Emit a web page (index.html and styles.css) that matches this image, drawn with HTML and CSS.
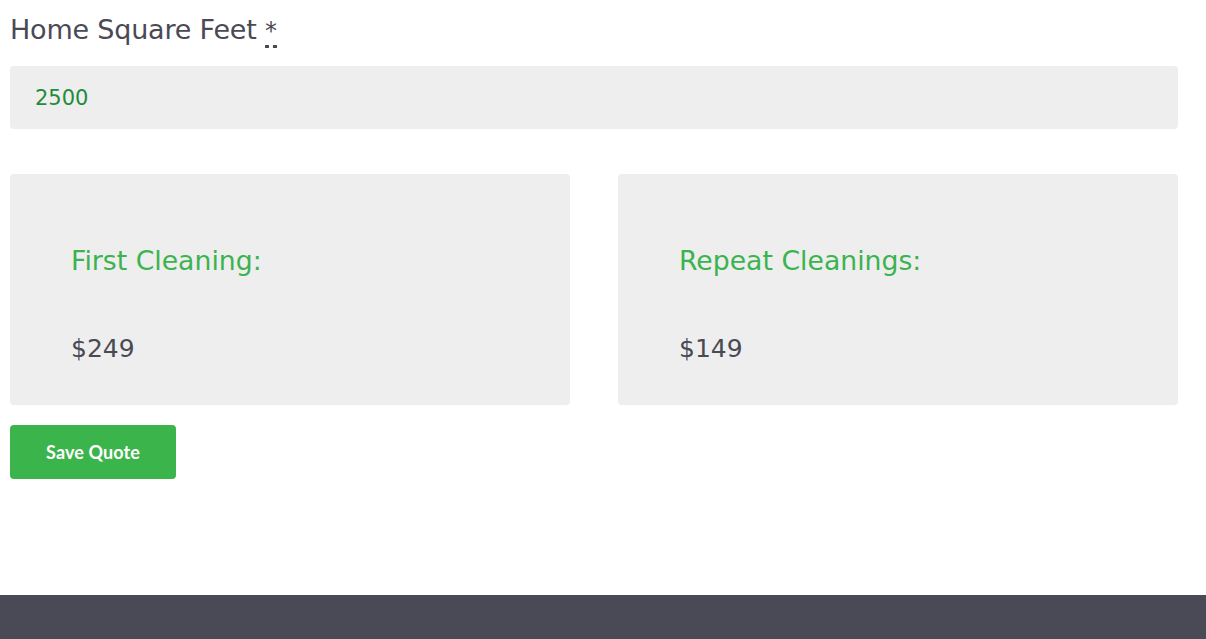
FILE: index.html
```html
<!DOCTYPE html>
<html>
<head>
<meta charset="utf-8">
<link rel="stylesheet" href="styles.css">
</head>
<body>
<main class="page">
  <div class="field">
    <label class="label">Home Square Feet <abbr class="req" title="required">*</abbr></label>
    <div class="input">2500</div>
  </div>
  <div class="cards">
    <div class="card">
      <div class="card-title">First Cleaning:</div>
      <div class="card-price">$249</div>
    </div>
    <div class="card">
      <div class="card-title">Repeat Cleanings:</div>
      <div class="card-price">$149</div>
    </div>
  </div>
  <button class="btn">Save Quote</button>
</main>
<footer class="footer"></footer>
</body>
</html>
```
FILE: styles.css
```css
html, body {
  margin: 0;
  padding: 0;
  background: #ffffff;
}
body {
  font-family: "DejaVu Sans", Verdana, sans-serif;
  color: #4a4a55;
  height: 639px;
  display: flex;
  flex-direction: column;
}
.page {
  padding: 11px 28px 0 10px;
  flex: 1;
}
.field {
  display: flex;
  flex-direction: column;
}
.label {
  font-size: 27px;
  line-height: 37px;
  color: #4a4a55;
  letter-spacing: -0.2px;
}
.req {
  text-decoration: none;
  border-bottom: 3px dotted #4a4a55;
  font-size: 24px;
}
.input {
  margin-top: 16px;
  height: 63px;
  box-sizing: border-box;
  background: #eeeeee;
  border-radius: 4px;
  padding: 1px 25px 0;
  display: flex;
  align-items: center;
  font-size: 21px;
  color: #238b3c;
}
.cards {
  margin-top: 45px;
  display: grid;
  grid-template-columns: 1fr 1fr;
  gap: 48px;
}
.card {
  background: #eeeeee;
  border-radius: 4px;
  height: 231px;
  box-sizing: border-box;
  padding: 70px 61px 0 61px;
}
.card-title {
  font-size: 26.7px;
  line-height: 33px;
  color: #3bb34f;
}
.card-price {
  margin-top: 56px;
  font-size: 25px;
  line-height: 32px;
  color: #4a4a55;
}
.btn {
  margin-top: 20px;
  width: 166px;
  height: 54px;
  border: none;
  border-radius: 4px;
  background: #3bb44c;
  color: #ffffff;
  font-family: Lato, "Open Sans", sans-serif;
  font-weight: 700;
  font-size: 18px;
  letter-spacing: 0.1px;
  padding: 0;
}
.footer {
  height: 44px;
  background: #4a4a56;
}
```
